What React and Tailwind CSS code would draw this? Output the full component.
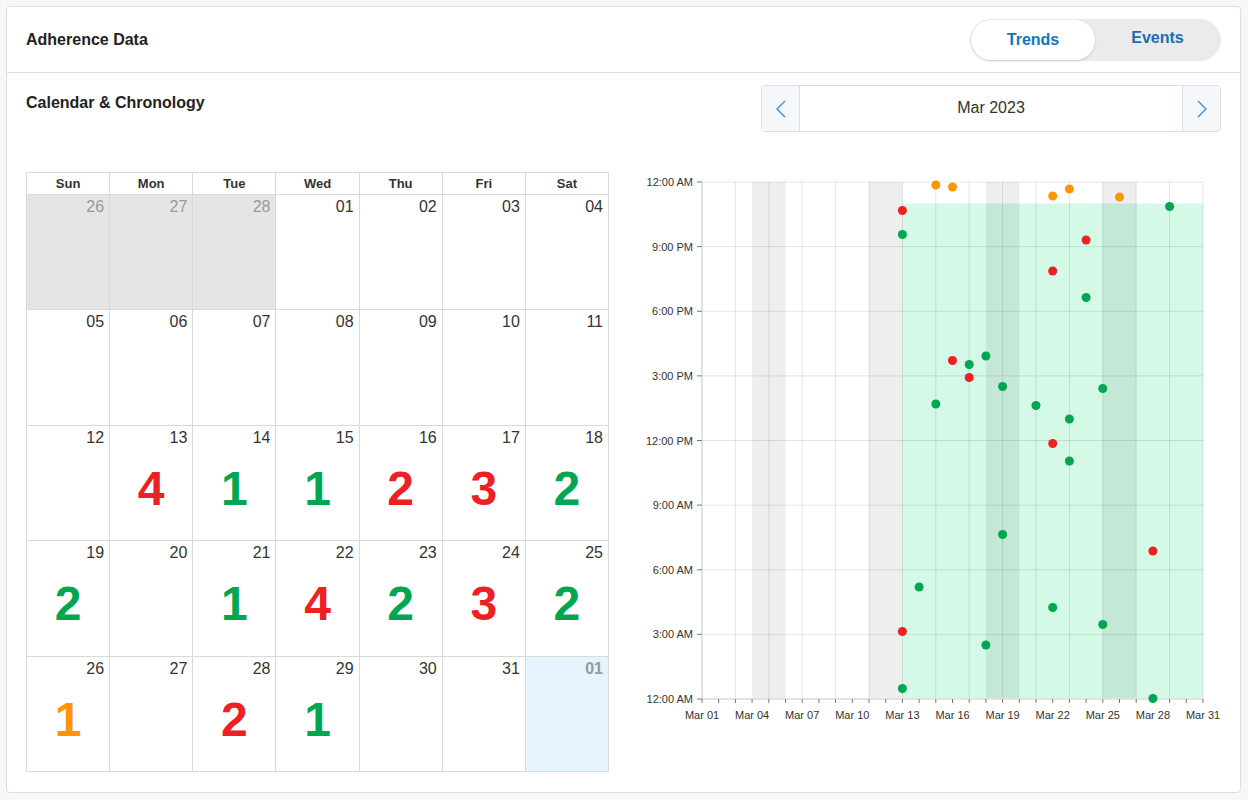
import React from 'react';

const FONT = { fontFamily: '"Liberation Sans", Arial, sans-serif' };

const RED = '#ed2024';
const GREEN = '#00a650';
const ORANGE = '#ff9500';

const WEEKDAYS = ['Sun', 'Mon', 'Tue', 'Wed', 'Thu', 'Fri', 'Sat'];

// [label, kind, count, color]  kind: prev | cur | next
const cells = [
  ['26', 'prev'], ['27', 'prev'], ['28', 'prev'], ['01'], ['02'], ['03'], ['04'],
  ['05'], ['06'], ['07'], ['08'], ['09'], ['10'], ['11'],
  ['12'], ['13', 'cur', 4, RED], ['14', 'cur', 1, GREEN], ['15', 'cur', 1, GREEN], ['16', 'cur', 2, RED], ['17', 'cur', 3, RED], ['18', 'cur', 2, GREEN],
  ['19', 'cur', 2, GREEN], ['20'], ['21', 'cur', 1, GREEN], ['22', 'cur', 4, RED], ['23', 'cur', 2, GREEN], ['24', 'cur', 3, RED], ['25', 'cur', 2, GREEN],
  ['26', 'cur', 1, ORANGE], ['27'], ['28', 'cur', 2, RED], ['29', 'cur', 1, GREEN], ['30'], ['31'], ['01', 'next'],
];

// chart geometry (svg coords)
const X0 = 66;
const DX = 16.7;
const Y0 = 10;
const H = 517;
const X_END = X0 + 30 * DX;
const dayX = (d) => X0 + (d - 1) * DX;

const Y_LABELS = ['12:00 AM', '9:00 PM', '6:00 PM', '3:00 PM', '12:00 PM', '9:00 AM', '6:00 AM', '3:00 AM', '12:00 AM'];

// [day, y on page, color]
const dots = [
  [15, 185, ORANGE], [16, 187, ORANGE], [22, 196, ORANGE], [23, 189, ORANGE], [26, 197, ORANGE],
  [13, 210.5, RED], [24, 240, RED], [22, 271, RED], [16, 360.5, RED], [17, 377.5, RED], [22, 443.5, RED], [28, 551, RED], [13, 631.5, RED],
  [13, 234.5, GREEN], [29, 206.5, GREEN], [24, 297.5, GREEN], [18, 356, GREEN], [17, 364.5, GREEN], [19, 386.5, GREEN],
  [25, 388.5, GREEN], [15, 404, GREEN], [21, 405.5, GREEN], [23, 419, GREEN], [23, 461, GREEN], [19, 534.5, GREEN],
  [14, 587, GREEN], [22, 607.5, GREEN], [25, 624.5, GREEN], [18, 645, GREEN], [13, 688.5, GREEN], [28, 698.5, GREEN],
];

const CalendarCell = ({ cell }) => {
  const [label, kind, count, color] = cell;
  const bg = kind === 'prev' ? 'bg-[#e5e5e5]' : kind === 'next' ? 'bg-[#e6f4ff]' : 'bg-white';
  const txt = kind === 'prev' ? 'text-[#999]' : kind === 'next' ? 'text-[#999] font-bold' : 'text-[#333]';
  return (
    <div className={`h-[115.4px] border-r border-b border-[#d9d9d9] ${bg}`}>
      <div className={`text-right text-[16px] leading-[20px] pr-[5px] pt-[2px] ${txt}`}>{label}</div>
      {count ? (
        <div className="mt-[17px] flex justify-center text-[48px] leading-[48px] font-bold" style={{ color }}>
          {count}
        </div>
      ) : null}
    </div>
  );
};

const Calendar = () => (
  <div className="w-[583px] shrink-0 border-l border-t border-[#d9d9d9] grid grid-cols-7">
    {WEEKDAYS.map((d) => (
      <div key={d} className="h-[22px] border-r border-b border-[#d9d9d9] flex items-center justify-center text-[13px] font-bold text-[#333]">
        {d}
      </div>
    ))}
    {cells.map((c, i) => (
      <CalendarCell key={i} cell={c} />
    ))}
  </div>
);

const Chart = () => {
  const bottom = Y0 + H;
  const weekends = [4, 11, 18, 25];
  return (
    <svg width="580" height="560" className="ml-[27px] shrink-0 overflow-visible" style={FONT}>
      {/* green active region */}
      <rect x={dayX(13)} y={Y0 + H / 24} width={X_END - dayX(13)} height={H - H / 24} fill="#d4f9e6" />
      {/* weekend bands */}
      {weekends.map((d) => (
        <rect key={d} x={dayX(d)} y={Y0} width={DX * 2} height={H} fill="#000" fillOpacity="0.065" />
      ))}
      {/* horizontal grid */}
      {Y_LABELS.map((_, i) => (
        <line key={i} x1={X0} x2={X_END} y1={Y0 + (i * H) / 8} y2={Y0 + (i * H) / 8} stroke="#000" strokeOpacity="0.1" />
      ))}
      {/* vertical grid */}
      {Array.from({ length: 16 }, (_, k) => (
        <line key={k} x1={dayX(1 + k * 2)} x2={dayX(1 + k * 2)} y1={Y0} y2={bottom} stroke="#000" strokeOpacity="0.1" />
      ))}
      {/* axes */}
      <line x1={X0} x2={X0} y1={Y0} y2={bottom} stroke="#e3e3e3" strokeWidth="2" />
      <line x1={X0} x2={X_END} y1={bottom} y2={bottom} stroke="#e3e3e3" strokeWidth="2" />
      {Y_LABELS.map((l, i) => (
        <g key={i}>
          <line x1={X0 - 5} x2={X0} y1={Y0 + (i * H) / 8} y2={Y0 + (i * H) / 8} stroke="#777" />
          <text x={X0 - 9} y={Y0 + (i * H) / 8 + 4} textAnchor="end" fontSize="11" fill="#333">
            {l}
          </text>
        </g>
      ))}
      {Array.from({ length: 31 }, (_, k) => (
        <line key={k} x1={dayX(k + 1)} x2={dayX(k + 1)} y1={bottom} y2={bottom + 4} stroke="#777" />
      ))}
      {Array.from({ length: 11 }, (_, k) => {
        const d = 1 + k * 3;
        return (
          <text key={k} x={dayX(d)} y={bottom + 20} textAnchor="middle" fontSize="11" fill="#333">
            {`Mar ${String(d).padStart(2, '0')}`}
          </text>
        );
      })}
      {dots.map(([d, y, c], i) => (
        <circle key={i} cx={dayX(d)} cy={y - 172} r="4.5" fill={c} />
      ))}
    </svg>
  );
};

const Chevron = ({ dir }) => (
  <svg width="12" height="20" viewBox="0 0 12 20">
    <polyline
      points={dir === 'left' ? '10,2 2,10 10,18' : '2,2 10,10 2,18'}
      fill="none"
      stroke="#3a8ee6"
      strokeWidth="1.4"
    />
  </svg>
);

export default function App() {
  return (
    <div className="min-h-screen bg-[#f7f7f7] pt-[6px] pl-[6px]" style={FONT}>
      <div className="w-[1235px] h-[787px] bg-white border border-[#dedede] rounded-[4px]">
        <div className="h-[66px] border-b border-[#dedede] flex items-center justify-between pl-[19px] pr-[19px]">
          <h2 className="text-[16px] font-bold text-[#222]">Adherence Data</h2>
          <div className="w-[251px] h-[42px] rounded-full bg-[#ebebeb] flex p-[1px] text-[16px] font-bold">
            <button type="button" className="w-[124px] rounded-full bg-white shadow-[0_1px_3px_rgba(0,0,0,0.15)] text-[#0b78bf]">
              Trends
            </button>
            <button type="button" className="flex-1 text-[#1a6db4] pb-[3px]">
              Events
            </button>
          </div>
        </div>

        <div className="px-[19px] pt-[12px]">
          <div className="flex justify-between">
            <h3 className="mt-[6px] text-[16px] font-bold text-[#222]">Calendar &amp; Chronology</h3>
            <div className="w-[460px] h-[47px] border border-[#dcdfe6] rounded-[4px] flex overflow-hidden">
              <button type="button" className="w-[38px] bg-[#f5f7fa] border-r border-[#dcdfe6] flex items-center justify-center">
                <Chevron dir="left" />
              </button>
              <div className="flex-1 flex items-center justify-center text-[16px] text-[#333] pb-[2px]">Mar 2023</div>
              <button type="button" className="w-[38px] bg-[#f5f7fa] border-l border-[#dcdfe6] flex items-center justify-center">
                <Chevron dir="right" />
              </button>
            </div>
          </div>

          <div className="flex mt-[40px]">
            <Calendar />
            <Chart />
          </div>
        </div>
      </div>
    </div>
  );
}
